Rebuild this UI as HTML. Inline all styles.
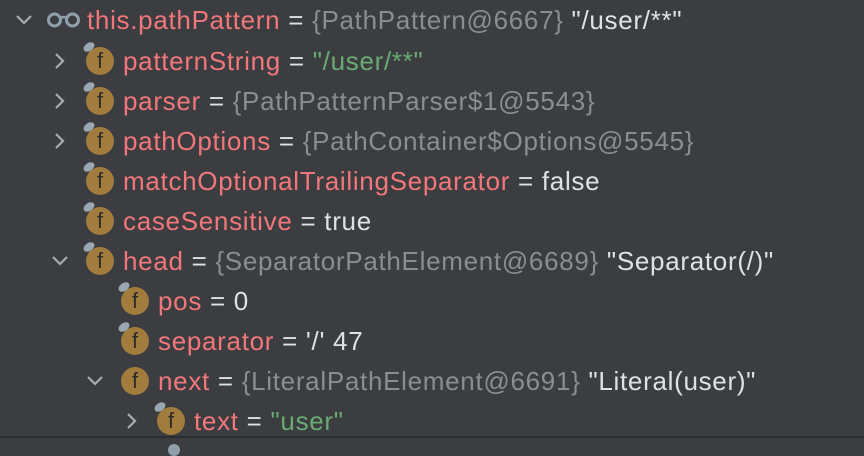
<html><head><style>
body{margin:0;width:864px;height:448px;background:#3b3d41;overflow:hidden;font-family:"Liberation Sans",sans-serif;font-size:26px;letter-spacing:0.7px;}
.r{position:absolute;left:0;height:40px;width:864px;white-space:nowrap}
.t{position:absolute;top:5px;}
.n{color:#f2777a}.g{color:#8b8d91}.w{color:#dfe1e5}.s{color:#6aab73}
.ic{position:absolute;top:6px;width:28px;height:28px;border-radius:50%;background:#a27c3c;color:#2b2b2b;font-size:22px;letter-spacing:0;text-align:center;line-height:28px;font-family:"Liberation Sans",sans-serif}
.pin{position:absolute;top:2px;width:12px;height:8px;border-radius:50%;background:#9aa7b0;transform:rotate(-35deg)}
.ch{position:absolute;top:8px}
</style></head><body>

<div class="r" style="top:0">
<svg class="ch" style="left:14px;top:10px" width="20" height="20"><path d="M3 6 L10 13 L17 6" stroke="#a9abaf" stroke-width="2.2" fill="none"/></svg>
<svg style="position:absolute;left:46px;top:12px" width="36" height="16"><circle cx="8.5" cy="8" r="6" stroke="#8fa0ab" stroke-width="3" fill="none"/><circle cx="26.5" cy="8" r="6" stroke="#8fa0ab" stroke-width="3" fill="none"/><path d="M14 6 Q17.5 4 21 6" stroke="#8fa0ab" stroke-width="2.5" fill="none"/></svg>
<span class="t" style="left:87px"><span class="n">this.pathPattern</span> <span class="w">=</span> <span class="g">{PathPattern@6667}</span> <span class="w">"/user/**"</span></span>
</div>

<div class="r" style="top:41px">
<svg class="ch" style="left:50px;top:10px" width="20" height="20"><path d="M6 3 L13 10 L6 17" stroke="#a9abaf" stroke-width="2.2" fill="none"/></svg>
<div class="ic" style="left:86px">f</div><div class="pin" style="left:83px"></div>
<span class="t" style="left:123px"><span class="n">patternString</span> <span class="w">=</span> <span class="s">"/user/**"</span></span>
</div>

<div class="r" style="top:81px">
<svg class="ch" style="left:50px;top:10px" width="20" height="20"><path d="M6 3 L13 10 L6 17" stroke="#a9abaf" stroke-width="2.2" fill="none"/></svg>
<div class="ic" style="left:86px">f</div><div class="pin" style="left:83px"></div>
<span class="t" style="left:123px"><span class="n">parser</span> <span class="w">=</span> <span class="g">{PathPatternParser$1@5543}</span></span>
</div>

<div class="r" style="top:121px">
<svg class="ch" style="left:50px;top:10px" width="20" height="20"><path d="M6 3 L13 10 L6 17" stroke="#a9abaf" stroke-width="2.2" fill="none"/></svg>
<div class="ic" style="left:86px">f</div><div class="pin" style="left:83px"></div>
<span class="t" style="left:123px"><span class="n">pathOptions</span> <span class="w">=</span> <span class="g">{PathContainer$Options@5545}</span></span>
</div>

<div class="r" style="top:161px">
<div class="ic" style="left:86px">f</div><div class="pin" style="left:83px"></div>
<span class="t" style="left:123px"><span class="n">matchOptionalTrailingSeparator</span> <span class="w">= false</span></span>
</div>

<div class="r" style="top:201px">
<div class="ic" style="left:86px">f</div><div class="pin" style="left:83px"></div>
<span class="t" style="left:123px"><span class="n">caseSensitive</span> <span class="w">= true</span></span>
</div>

<div class="r" style="top:241px">
<svg class="ch" style="left:50px;top:10px" width="20" height="20"><path d="M3 6 L10 13 L17 6" stroke="#a9abaf" stroke-width="2.2" fill="none"/></svg>
<div class="ic" style="left:86px">f</div><div class="pin" style="left:83px"></div>
<span class="t" style="left:123px"><span class="n">head</span> <span class="w">=</span> <span class="g">{SeparatorPathElement@6689}</span> <span class="w">"Separator(/)"</span></span>
</div>

<div class="r" style="top:281px">
<div class="ic" style="left:121px">f</div><div class="pin" style="left:118px"></div>
<span class="t" style="left:158px"><span class="n">pos</span> <span class="w">= 0</span></span>
</div>

<div class="r" style="top:321px">
<div class="ic" style="left:121px">f</div><div class="pin" style="left:118px"></div>
<span class="t" style="left:158px"><span class="n">separator</span> <span class="w">= '/' 47</span></span>
</div>

<div class="r" style="top:361px">
<svg class="ch" style="left:85px;top:10px" width="20" height="20"><path d="M3 6 L10 13 L17 6" stroke="#a9abaf" stroke-width="2.2" fill="none"/></svg>
<div class="ic" style="left:121px">f</div>
<span class="t" style="left:158px"><span class="n">next</span> <span class="w">=</span> <span class="g">{LiteralPathElement@6691}</span> <span class="w">"Literal(user)"</span></span>
</div>

<div class="r" style="top:401px">
<svg class="ch" style="left:122px;top:10px" width="20" height="20"><path d="M6 3 L13 10 L6 17" stroke="#a9abaf" stroke-width="2.2" fill="none"/></svg>
<div class="ic" style="left:157px">f</div><div class="pin" style="left:154px"></div>
<span class="t" style="left:194px"><span class="n">text</span> <span class="w">=</span> <span class="s">"user"</span></span>
</div>

<div style="position:absolute;left:0;top:436px;width:864px;height:2px;background:#2b2d30"></div>
<div style="position:absolute;left:168px;top:444px;width:12px;height:12px;border-radius:50%;background:#8fa0ab"></div>
</body></html>
